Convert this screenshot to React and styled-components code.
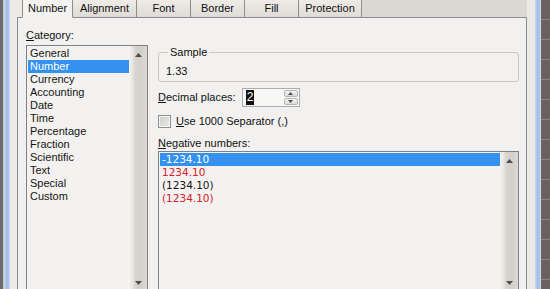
import styled, { createGlobalStyle } from "styled-components"

const GlobalStyle = createGlobalStyle`
    html, body {
        margin: 0;
        padding: 0;
        background: #6f6864;
    }
    body {
        font-family: "Liberation Sans", Arial, sans-serif;
        font-size: 11px;
        color: #111;
    }
`

const Screen = styled.div`
    display: flex;
    width: 550px;
    height: 289px;
    overflow: hidden;
`

const Backdrop = styled.div`
    width: ${props => props.width}px;
    flex: none;
    background: ${props => props.side === "left"
        ? "linear-gradient(to right, #6d6d70 0 3px, #c9c9c9 3px)"
        : "repeating-linear-gradient(to bottom, #6b625d 0 19px, #8d8580 19px 20px)"};
`

const Frame = styled.div`
    width: 6px;
    flex: none;
    background: linear-gradient(to right, #c9d9f1, #a7c1e8 40%, #a3bde6 70%, #d7e4f6);
`

const Dialog = styled.div`
    flex: 1;
    display: flex;
    flex-direction: column;
    background: #eceae7;
    padding: 0 8px 0 7px;
`

const TabStrip = styled.div`
    display: flex;
    height: 18px;
    flex: none;
`

const TabLead = styled.div`
    width: 5px;
    flex: none;
    border-bottom: 1px solid #8a8c92;
`

const TabFiller = styled.div`
    flex: 1;
    background: #dbd7d2;
    border-bottom: 1px solid #8a8c92;
`

const Tab = styled.div`
    width: ${props => props.width}px;
    flex: none;
    box-sizing: border-box;
    display: flex;
    align-items: center;
    justify-content: center;
    padding-bottom: 1px;
    border-right: 1px solid #8e8e8e;
    border-left: ${props => props.first ? "1px solid #8e8e8e" : "none"};
    border-bottom: 1px solid ${props => props.active ? "#f3f2f0" : "#8a8c92"};
    background: ${props => props.active
        ? "#f4f3f1"
        : "linear-gradient(#efece8, #dfdbd6)"};
    line-height: 13px;
    white-space: nowrap;
`

const Panel = styled.div`
    flex: 1;
    background: #f2f1ef;
    border: 1px solid #8a8c92;
    border-top: none;
    border-bottom: none;
    padding: 11px 7px 0 8px;
`

const Columns = styled.div`
    display: flex;
    gap: 10px;
`

const LeftCol = styled.div`
    width: 122px;
    flex: none;
    display: flex;
    flex-direction: column;
`

const RightCol = styled.div`
    flex: 1;
    display: flex;
    flex-direction: column;
`

const FieldLabel = styled.div`
    line-height: 13px;
    white-space: nowrap;
    margin-top: ${props => props.gap || 0}px;
`

const Mnemonic = styled.span`
    text-decoration: underline;
    text-underline-offset: 1px;
`

const ListBox = styled.div`
    display: flex;
    height: ${props => props.height}px;
    box-sizing: border-box;
    margin-top: ${props => props.gap}px;
    border: 1px solid #7f8188;
    background: #f3f2f0;
`

const ListItems = styled.div`
    flex: 1;
    padding: 1px;
    font-family: ${props => props.numeric
        ? "\"DejaVu Sans\", \"Liberation Sans\", sans-serif"
        : "inherit"};
    font-size: ${props => props.numeric ? "10.5px" : "11px"};
`

const ListItem = styled.div`
    height: 13px;
    line-height: 13px;
    padding-left: 2px;
    white-space: nowrap;
    background: ${props => props.selected ? "#3591ef" : "transparent"};
    color: ${props => props.selected ? "#fff" : props.red ? "#d3232a" : "#151515"};
`

const ScrollBar = styled.div`
    width: 17px;
    flex: none;
    display: flex;
    flex-direction: column;
    justify-content: space-between;
    background: linear-gradient(to right, #ecebe8 0 2px, #d8d4cf 5px, #d3cfca 60%, #dcd9d4);
`

const ScrollArrow = styled.div`
    height: 17px;
    display: flex;
    align-items: center;
    justify-content: center;
`

const GroupBox = styled.fieldset`
    margin: 17px 0 0 0;
    padding: 6px 7px 3px 7px;
    border: 1px solid #c9c8c5;
    border-radius: 3px;
    min-width: 0;
`

const Legend = styled.legend`
    padding: 0 2px;
    margin-left: 2px;
    line-height: 13px;
`

const SampleValue = styled.div`
    line-height: 13px;
`

const Row = styled.div`
    display: flex;
    align-items: center;
    margin-top: ${props => props.gap}px;
    line-height: 13px;
`

const SpinBox = styled.div`
    display: flex;
    width: 58px;
    height: 19px;
    box-sizing: border-box;
    margin-left: 6px;
    border: 1px solid #abadb3;
    background: #f7f7f6;
`

const SpinText = styled.div`
    flex: 1;
    display: flex;
    align-items: center;
    padding-left: 3px;
`

const Selection = styled.span`
    background: #111;
    color: #fff;
    font-size: 12px;
    line-height: 15px;
    padding: 0 1px;
`

const SpinButtons = styled.div`
    width: 14px;
    display: flex;
    flex-direction: column;
    gap: 1px;
    padding: 1px 1px 1px 0;
`

const SpinButton = styled.div`
    flex: 1;
    display: flex;
    align-items: center;
    justify-content: center;
    border: 1px solid #b8b7b4;
    border-radius: 2px;
    background: linear-gradient(#f3f3f2, #dcdad7);
`

const CheckBox = styled.div`
    width: 13px;
    height: 13px;
    box-sizing: border-box;
    border: 1px solid #8e8f8f;
    background: linear-gradient(135deg, #cfcdca, #ebeae8);
    box-shadow: inset 0 0 0 1px #f4f4f4;
    margin-right: 5px;
`

function Arrow({ up, size = 7 }) {
    const h = Math.round(size * 0.57)
    return (
        <svg width={size} height={h} viewBox={`0 0 ${size} ${h}`}>
            <path
                d={up ? `M0 ${h} L${size / 2} 0 L${size} ${h} Z` : `M0 0 L${size / 2} ${h} L${size} 0 Z`}
                fill="#4d4d4d"
            />
        </svg>
    )
}

function Scroller() {
    return (
        <ScrollBar>
            <ScrollArrow><Arrow up /></ScrollArrow>
            <ScrollArrow><Arrow /></ScrollArrow>
        </ScrollBar>
    )
}

const tabs = [
    { label: "Number", width: 51 },
    { label: "Alignment", width: 64 },
    { label: "Font", width: 54 },
    { label: "Border", width: 54 },
    { label: "Fill", width: 54 },
    { label: "Protection", width: 63 },
]

const categories = [
    "General", "Number", "Currency", "Accounting", "Date", "Time",
    "Percentage", "Fraction", "Scientific", "Text", "Special", "Custom",
]

const negatives = [
    { text: "-1234.10", red: false },
    { text: "1234.10", red: true },
    { text: "(1234.10)", red: false },
    { text: "(1234.10)", red: true },
]

function App() {
    return (
        <Screen>
            <GlobalStyle />
            <Backdrop side="left" width={4} />
            <Frame />
            <Dialog>
                <TabStrip>
                    <TabLead />
                    {tabs.map((tab, i) => (
                        <Tab key={tab.label} width={tab.width} first={i === 0} active={i === 0}>
                            {tab.label}
                        </Tab>
                    ))}
                    <TabFiller />
                </TabStrip>
                <Panel>
                    <Columns>
                        <LeftCol>
                            <FieldLabel><Mnemonic>C</Mnemonic>ategory:</FieldLabel>
                            <ListBox height={247} gap={3}>
                                <ListItems>
                                    {categories.map(name => (
                                        <ListItem key={name} selected={name === "Number"}>{name}</ListItem>
                                    ))}
                                </ListItems>
                                <Scroller />
                            </ListBox>
                        </LeftCol>
                        <RightCol>
                            <GroupBox>
                                <Legend>Sample</Legend>
                                <SampleValue>1.33</SampleValue>
                            </GroupBox>
                            <Row gap={6}>
                                <span><Mnemonic>D</Mnemonic>ecimal places:</span>
                                <SpinBox>
                                    <SpinText><Selection>2</Selection></SpinText>
                                    <SpinButtons>
                                        <SpinButton><Arrow up size={5} /></SpinButton>
                                        <SpinButton><Arrow size={5} /></SpinButton>
                                    </SpinButtons>
                                </SpinBox>
                            </Row>
                            <Row gap={8}>
                                <CheckBox />
                                <span><Mnemonic>U</Mnemonic>se 1000 Separator (,)</span>
                            </Row>
                            <FieldLabel gap={9}><Mnemonic>N</Mnemonic>egative numbers:</FieldLabel>
                            <ListBox height={141} gap={1}>
                                <ListItems numeric>
                                    {negatives.map((item, i) => (
                                        <ListItem key={i} selected={i === 0} red={item.red}>{item.text}</ListItem>
                                    ))}
                                </ListItems>
                                <Scroller />
                            </ListBox>
                        </RightCol>
                    </Columns>
                </Panel>
            </Dialog>
            <Frame />
            <Backdrop side="right" width={9} />
        </Screen>
    )
}

export default App
